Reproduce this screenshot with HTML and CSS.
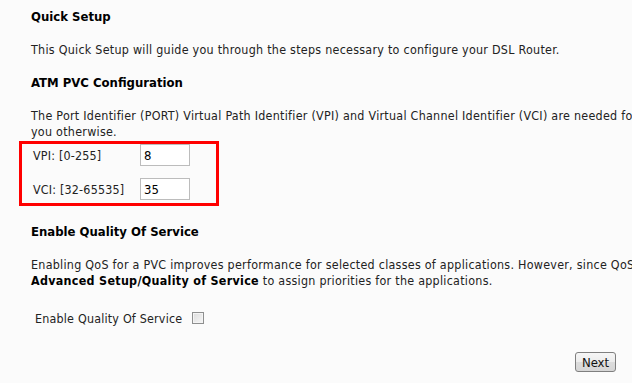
FILE: index.html
```html
<!DOCTYPE html>
<html lang="en">
<head>
  <meta charset="UTF-8">
  <title>Quick Setup</title>
  <link rel="stylesheet" href="styles.css">
</head>
<body>
  <form class="page">
    <div class="title">Quick Setup</div>
    <p class="text">This Quick Setup will guide you through the steps necessary to configure your DSL Router.</p>

    <div class="title">ATM PVC Configuration</div>
    <p class="text">The Port Identifier (PORT) Virtual Path Identifier (VPI) and Virtual Channel Identifier (VCI) are needed for setting up the ATM PVC. Do not change VPI and VCI numbers unless your ISP instructs<br>you otherwise.</p>

    <div class="pvc-box">
      <div class="field">
        <span class="label">VPI: [0-255]</span>
        <input class="num" type="text" value="8">
      </div>
      <div class="field">
        <span class="label">VCI: [32-65535]</span>
        <input class="num" type="text" value="35">
      </div>
    </div>

    <div class="title qos-title">Enable Quality Of Service</div>
    <p class="text">Enabling QoS for a PVC improves performance for selected classes of applications. However, since QoS also consumes system resources, the number of PVCs will be reduced consequently. Use<br><b>Advanced Setup/Quality of Service</b> to assign priorities for the applications.</p>

    <div class="check-row">
      <span class="check-label">Enable Quality Of Service</span>
      <input class="check" type="checkbox">
    </div>

    <div class="actions">
      <button type="button" class="btn">Next</button>
    </div>
  </form>
</body>
</html>
```

FILE: styles.css
```css
* {
  margin: 0;
  padding: 0;
  box-sizing: border-box;
}

body {
  font-family: Tahoma, "DejaVu Sans Condensed", "DejaVu Sans", sans-serif;
  font-size: 12.4px;
  color: #222;
  background: #fbfbfb;
  overflow: hidden;
  width: 632px;
  height: 383px;
}

.page {
  padding: 9px 0 0 31px;
  width: 632px;
}

.title {
  font-weight: bold;
  font-size: 13px;
  color: #000;
  line-height: 16px;
}

.text {
  white-space: nowrap;
  line-height: 16px;
  letter-spacing: 0.27px;
  margin: 17px 0;
}

.text b {
  color: #000;
  letter-spacing: 0.3px;
}

.pvc-box {
  margin: -16px 0 0 -12px;
  width: 200px;
  height: 65px;
  border: 3px solid #f00;
  padding-left: 11px;
  display: flex;
  flex-direction: column;
  gap: 12px;
}

.field {
  display: flex;
  align-items: center;
  height: 22px;
  letter-spacing: 0.2px;
}

.label {
  width: 107px;
}

.num {
  width: 50px;
  height: 22px;
  border: 1px solid #bcbcbc;
  background: #fff;
  font: inherit;
  font-size: 13px;
  padding: 0 3px;
  color: #000;
  outline: none;
}

.qos-title {
  margin-top: 18px;
}

.check-row {
  display: flex;
  align-items: center;
  padding-left: 4px;
  margin-top: 21px;
  height: 16px;
  letter-spacing: 0.2px;
}

.check-label {
  width: 157px;
}

.check {
  appearance: none;
  width: 12px;
  height: 12px;
  border: 1px solid #8e8f8f;
  background: linear-gradient(135deg, #dcdcdc, #f6f6f6);
  box-shadow: inset 0 0 0 1px #f4f4f4;
}

.actions {
  display: flex;
  justify-content: flex-end;
  padding-right: 16px;
  margin-top: 26px;
}

.btn {
  font: inherit;
  font-size: 13px;
  width: 41px;
  height: 20px;
  background: linear-gradient(#f6f6f6 0%, #ececec 50%, #dcdcdc 51%, #d6d6d6 100%);
  border: 1px solid #7f7f7f;
  border-radius: 3px;
  color: #111;
}
```
